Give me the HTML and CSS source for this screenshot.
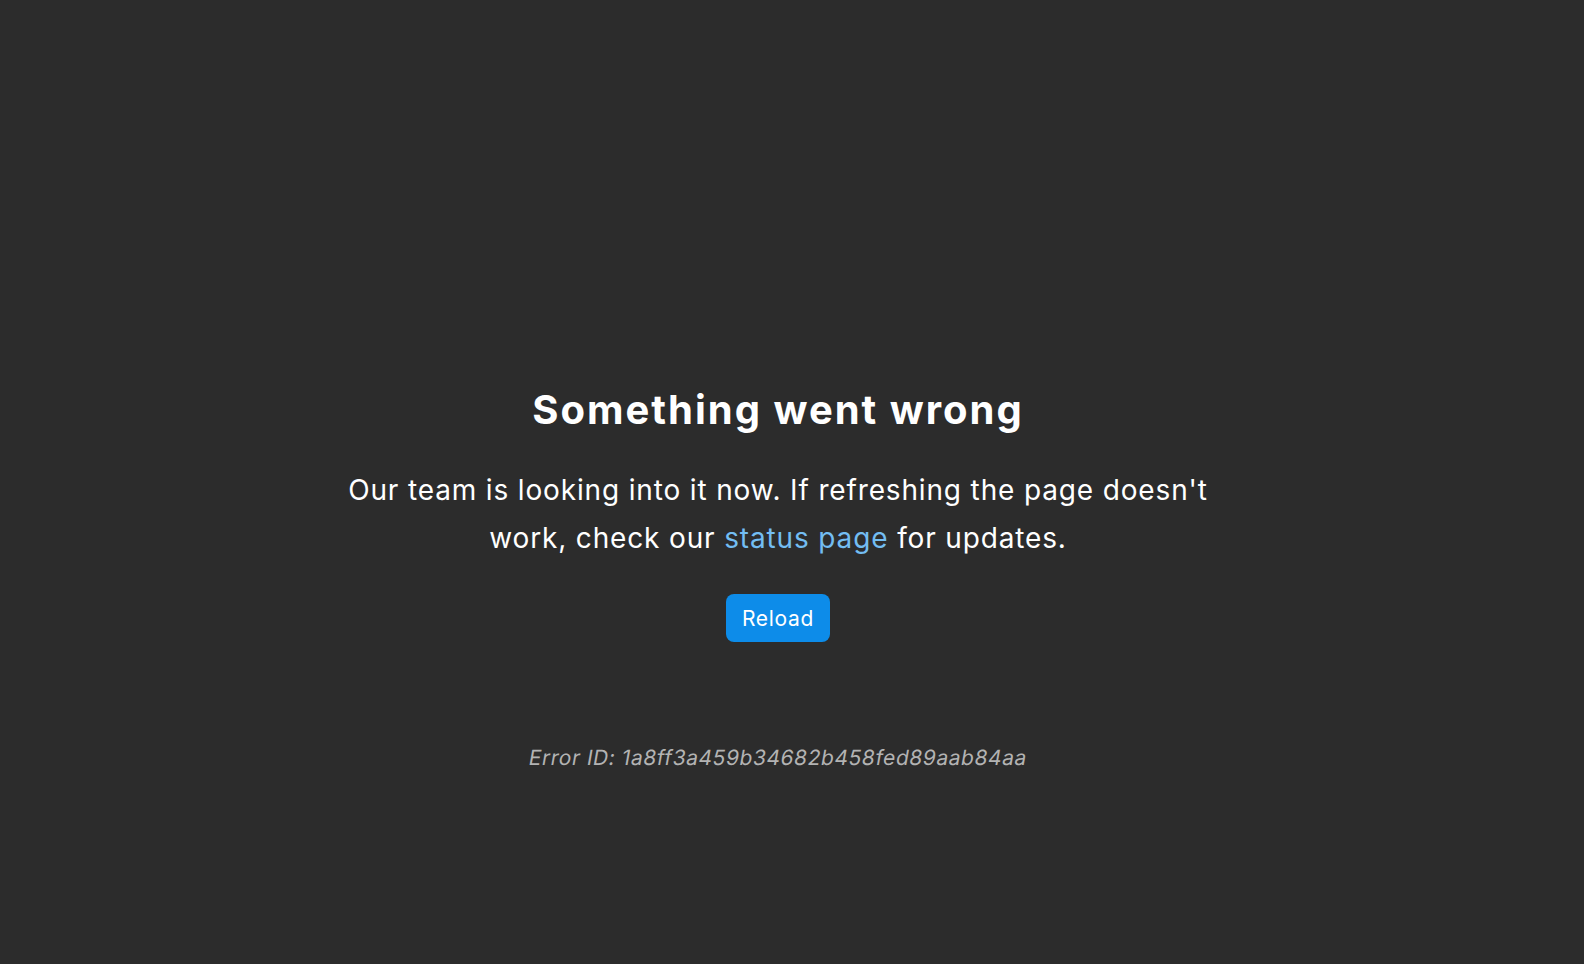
FILE: index.html
```html
<!DOCTYPE html>
<html lang="en">
<head>
<meta charset="utf-8">
<title>Something went wrong</title>
<link rel="stylesheet" href="styles.css">
</head>
<body>
<main class="error-page">
  <h1 class="title">Something went wrong</h1>
  <p class="message">Our team is looking into it now. If refreshing the page doesn't work, check our <a class="link" href="#">status page</a> for updates.</p>
  <button class="reload" type="button">Reload</button>
  <p class="error-id"><span class="error-id-text">Error ID: 1a8ff3a459b34682b458fed89aab84aa</span></p>
</main>
</body>
</html>
```
FILE: styles.css
```css
html, body {
  margin: 0;
  padding: 0;
  height: 100%;
}
body {
  background: #2c2c2c;
  color: #ffffff;
  font-family: Inter, "Noto Sans", sans-serif;
  font-optical-sizing: none;
  font-variation-settings: "opsz" 14;
}
.error-page {
  display: flex;
  flex-direction: column;
  align-items: center;
  padding-top: 386px;
  padding-right: 28px;
  text-align: center;
}
.title {
  margin: 0;
  font-size: 40px;
  line-height: 48px;
  font-weight: 700;
  letter-spacing: 2px;
}
.message {
  margin: 32px 0 0;
  max-width: 900px;
  font-size: 28px;
  line-height: 48px;
  font-weight: 400;
  letter-spacing: 0.85px;
}
.link {
  color: #73bdf2;
  text-decoration: none;
}
.reload {
  margin-top: 32px;
  height: 48px;
  padding: 0 16px;
  border: none;
  border-radius: 8px;
  background: #0d8ce9;
  color: #ffffff;
  font-family: inherit;
  font-variation-settings: "opsz" 14;
  font-size: 21px;
  letter-spacing: 0.7px;
}
.error-id {
  margin: 102px 0 0;
  font-size: 21px;
  line-height: 28px;
  color: #b3b3b3;
  letter-spacing: 0.55px;
}
.error-id-text {
  display: inline-block;
  transform: skewX(-10deg);
}
```
